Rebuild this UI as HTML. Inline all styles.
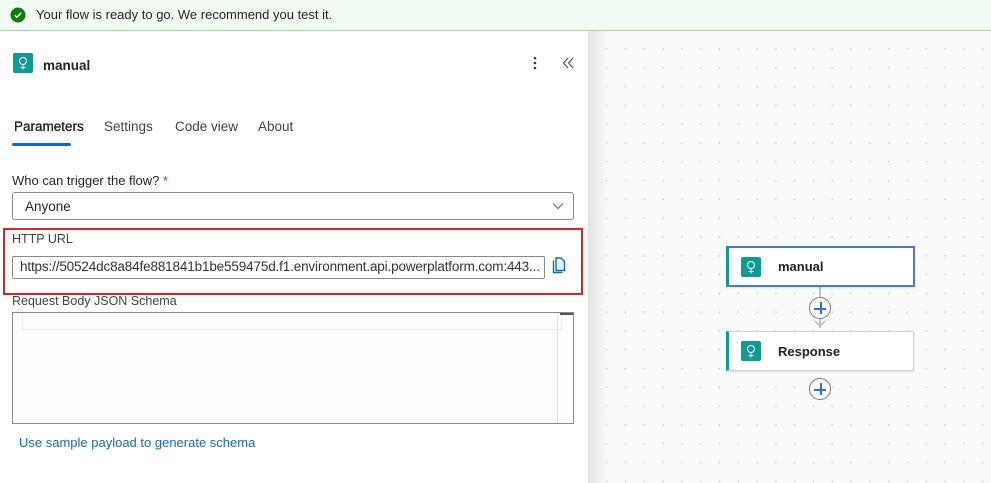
<!DOCTYPE html>
<html><head><meta charset="utf-8"><style>
*{margin:0;padding:0;box-sizing:border-box}
body{width:991px;height:483px;overflow:hidden;font-family:"Liberation Sans",sans-serif;color:#242424;background:#fff;position:relative}
.abs{position:absolute}
#banner{left:0;top:0;width:991px;height:31px;background:#f1faf1;border-bottom:1px solid #9fd89f}
#canvas{left:589px;top:31px;width:402px;height:452px;background-color:#fafafa;
background-image:radial-gradient(circle,#c4c4c4 0.6px,transparent 0.9px);background-size:18.8px 18.8px;background-position:8.3px 8.6px}
#shadow{left:589px;top:31px;width:20px;height:452px;background:linear-gradient(90deg,#e6e6e6,rgba(250,250,250,0))}
#panel{left:0;top:31px;width:589px;height:452px;background:#fff;border-right:1px solid #e0e0e0}
.t{position:absolute;white-space:nowrap;font-size:14px;line-height:16px}
.node{position:absolute;background:#fff;border:1px solid #d1d1d1;border-left:3px solid #0f9a94;box-shadow:0 1px 2px rgba(0,0,0,.12)}
.ic{position:absolute;width:20px;height:20px;background:#0f9a94;border-radius:2px}
.plus{position:absolute;width:22px;height:22px;border:1px solid #777;border-radius:50%;background:#fff}
.plus:before{content:"";position:absolute;left:4px;top:10px;width:12px;height:1.5px;background:#2f6fd0}
.plus:after{content:"";position:absolute;left:10px;top:4px;width:1.5px;height:12px;background:#2f6fd0}
</style></head><body>
<div id="banner" class="abs">
 <svg class="abs" style="left:10px;top:7px" width="16" height="16"><circle cx="8" cy="8" r="7.5" fill="#107c10"/><path d="M4.8 8.2l2.1 2.1 4.3-4.4" stroke="#fff" stroke-width="1.4" fill="none"/></svg>
 <div class="t" style="left:36px;top:7px;font-size:13px">Your flow is ready to go. We recommend you test it.</div>
</div>
<div id="canvas" class="abs"></div>
<div id="shadow" class="abs"></div>
<div id="panel" class="abs">
 <div class="ic" style="left:13px;top:22px"><svg width="20" height="20"><circle cx="10" cy="8" r="3.5" stroke="#fff" fill="none"/><path d="M10 11.5v5M7.5 14.5h5" stroke="#fff"/></svg></div>
 <div class="t" style="left:43px;top:27px;font-weight:bold;font-size:13.5px">manual</div>
 <svg class="abs" style="left:532px;top:24px" width="6" height="16"><circle cx="3" cy="3" r="1.3" fill="#333"/><circle cx="3" cy="8" r="1.3" fill="#333"/><circle cx="3" cy="13" r="1.3" fill="#333"/></svg>
 <svg class="abs" style="left:562px;top:26px" width="13" height="12"><path d="M6 1L1.5 6 6 11M11 1L6.5 6 11 11" stroke="#444" fill="none" stroke-width="1"/></svg>
 <div class="t" style="left:14px;top:88px;color:#1a1a1a;font-size:13.5px;-webkit-text-stroke:0.3px #1a1a1a">Parameters</div>
 <div class="abs" style="left:12px;top:112px;width:59px;height:3px;background:#0f6cbd;border-radius:2px"></div>
 <div class="t" style="left:104px;top:88px;color:#424242;font-size:13.5px">Settings</div>
 <div class="t" style="left:175px;top:88px;color:#424242;font-size:13.5px">Code view</div>
 <div class="t" style="left:258px;top:88px;color:#424242;font-size:13.5px">About</div>
 <div class="t" style="left:12px;top:142px;font-size:13px">Who can trigger the flow? <span style="color:#c4314b">*</span></div>
 <div class="abs" style="left:12px;top:161px;width:562px;height:28px;border:1px solid #8a8a8a;border-radius:3px"></div>
 <div class="t" style="left:25px;top:168px;font-size:13.5px">Anyone</div>
 <svg class="abs" style="left:552px;top:171px" width="12" height="8"><path d="M1 1.5l5 5 5-5" stroke="#666" fill="none"/></svg>
 <div class="t" style="left:12px;top:200px;font-size:12.5px;color:#424242">HTTP URL</div>
 <div class="abs" style="left:12px;top:225px;width:533px;height:23px;border:1px solid #8a8a8a;border-radius:2px"></div>
 <div class="t" style="left:20px;top:228px;font-size:13.5px;color:#333;letter-spacing:-0.15px">https://50524dc8a84fe881841b1be559475d.f1.environment.api.powerplatform.com:443...</div>
 <svg class="abs" style="left:551px;top:226px" width="16" height="18"><path d="M2.5 3.5v12h9" stroke="#0f6cbd" fill="none" stroke-width="1.4"/><path d="M5 1h5l3.5 3.5v9H5z" stroke="#0f6cbd" fill="#e8f1fb" stroke-width="1.4"/></svg>
 <div class="t" style="left:12px;top:262px;font-size:12.5px;color:#424242">Request Body JSON Schema</div>
 <div class="abs" style="left:3px;top:197px;width:580px;height:67px;border:2px solid #e02424"></div>
 <div class="abs" style="left:12px;top:281px;width:562px;height:112px;border:1px solid #8a8a8a;background:#fdfdfb"></div>
 <div class="abs" style="left:22px;top:283px;width:540px;height:16px;border:1px solid #ececec;border-top:none"></div>
 <div class="abs" style="left:557px;top:283px;width:1px;height:109px;background:#e0e0e0"></div>
 <div class="abs" style="left:560px;top:282px;width:13px;height:2px;background:#555"></div>
 <div class="t" style="left:19px;top:404px;font-size:13px;color:#0f6cbd">Use sample payload to generate schema</div>
</div>
<div class="abs" style="left:819px;top:286px;width:2px;height:42px;background:#c4c4c4"></div>
<svg class="abs" style="left:814px;top:320px" width="12" height="8"><path d="M1 1l5 5 5-5" stroke="#bbb" fill="none" stroke-width="1.5"/></svg>
<div class="node" style="left:726px;top:246px;width:189px;height:41px;border:2px solid #4a7ad0;border-left:3px solid #0f9a94"></div>
<div class="ic" style="left:741px;top:257px"><svg width="20" height="20"><circle cx="10" cy="8" r="3.5" stroke="#fff" fill="none"/><path d="M10 11.5v5M7.5 14.5h5" stroke="#fff"/></svg></div>
<div class="t" style="left:778px;top:259px;font-weight:bold;font-size:13px">manual</div>
<div class="plus" style="left:809px;top:297px"></div>
<div class="node" style="left:726px;top:331px;width:188px;height:40px"></div>
<div class="ic" style="left:741px;top:341px"><svg width="20" height="20"><circle cx="10" cy="8" r="3.5" stroke="#fff" fill="none"/><path d="M10 11.5v5M7.5 14.5h5" stroke="#fff"/></svg></div>
<div class="t" style="left:778px;top:344px;font-weight:bold;font-size:13px">Response</div>
<div class="plus" style="left:809px;top:378px"></div>
</body></html>
